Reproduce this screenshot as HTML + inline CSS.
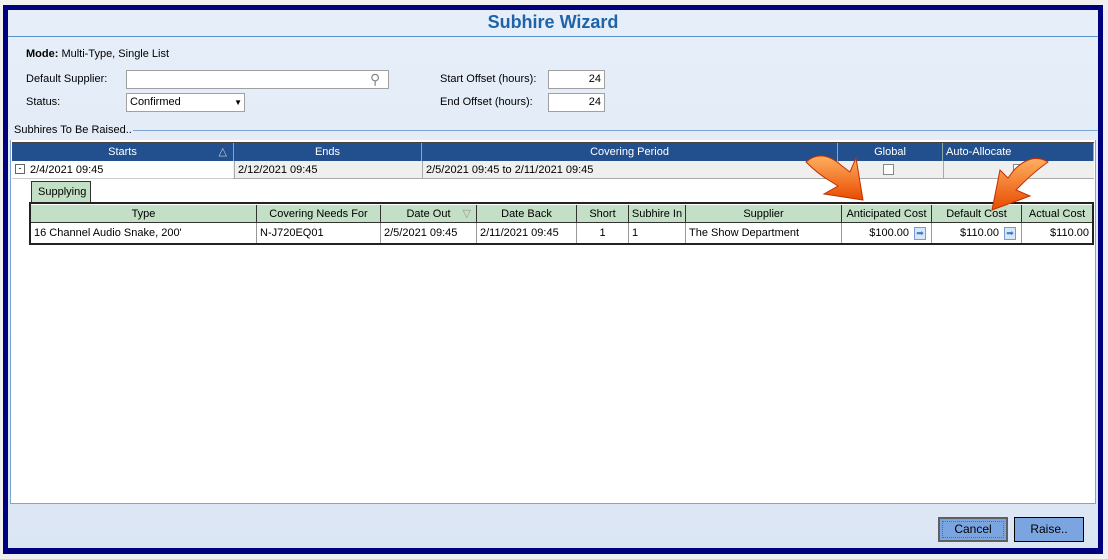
<!DOCTYPE html>
<html><head><style>
*{margin:0;padding:0;box-sizing:border-box}
body{width:1108px;height:559px;background:#f0f0f0;font-family:"Liberation Sans",sans-serif;font-size:11px;color:#000;position:relative;overflow:hidden}
.a{position:absolute}
.hd{position:absolute;background:#22508f;color:#fff;text-align:center;height:18px;line-height:18px;border-right:1px solid #8aa;}
.c{position:absolute;height:18px;line-height:18px;padding-left:3px;white-space:nowrap}
.gh{position:absolute;top:205px;height:18px;line-height:18px;background:#c3dfc5;text-align:center;border-right:1px solid #333;white-space:nowrap}
.gd{position:absolute;top:223px;height:20px;line-height:20px;border-right:1px solid #999;padding:0 3px;white-space:nowrap}
.inp{position:absolute;background:#fff;border:1px solid #a0a0a0;height:19px;line-height:17px;padding:0 3px}
.btn{position:absolute;display:inline-block;width:12px;height:13px;background:#d9e6f7;border:1px solid #7a9cd0;top:227px;color:#3a7bd5;font-size:9px;line-height:11px;text-align:center}
</style></head><body>
<div class="a" style="left:3px;top:5px;width:1100px;height:549px;background:#00007f"></div>
<div class="a" style="left:8px;top:10px;width:1090px;height:538px;background:linear-gradient(#e6eef9,#dbe6f4)"></div>
<div class="a" style="left:8px;top:36px;width:1090px;height:1px;background:#5a90c8"></div>
<div class="a" style="left:8px;top:12px;width:1090px;text-align:center;font-size:18px;font-weight:bold;color:#1f64a8">Subhire Wizard</div>
<div class="a" style="left:26px;top:48px"><b>Mode:</b> Multi-Type, Single List</div>
<div class="a" style="left:26px;top:73px">Default Supplier:</div>
<div class="inp" style="left:126px;top:70px;width:263px"></div>
<div class="a" style="left:370px;top:71px;color:#888;font-size:14px">&#9906;</div>
<div class="a" style="left:26px;top:96px">Status:</div>
<div class="inp" style="left:126px;top:93px;width:119px">Confirmed<span style="position:absolute;right:2px;top:0;font-size:8px">&#9660;</span></div>
<div class="a" style="left:440px;top:73px">Start Offset (hours):</div>
<div class="inp" style="left:548px;top:70px;width:57px;text-align:right">24</div>
<div class="a" style="left:440px;top:96px">End Offset (hours):</div>
<div class="inp" style="left:548px;top:93px;width:57px;text-align:right">24</div>
<div class="a" style="left:14px;top:124px">Subhires To Be Raised..</div>
<div class="a" style="left:133px;top:130px;width:965px;height:1px;background:#7aa6d6"></div>
<div class="a" style="left:10px;top:140px;width:1086px;height:364px;background:#fff;border:1px solid #7aa6d6;border-top:none"></div>
<div class="a" style="left:12px;top:142px;width:1082px;height:1px;background:#444"></div>
<div class="hd" style="left:12px;top:143px;width:222px">Starts<span style="position:absolute;right:6px;color:#ccc">&#9651;</span></div>
<div class="hd" style="left:234px;top:143px;width:188px">Ends</div>
<div class="hd" style="left:422px;top:143px;width:416px">Covering Period</div>
<div class="hd" style="left:838px;top:143px;width:105px">Global</div>
<div class="hd" style="left:943px;top:143px;width:151px;text-align:left;padding-left:3px">Auto-Allocate</div>
<div class="a" style="left:233px;top:161px;width:861px;height:18px;background:#efefef;border-bottom:1px solid #aaa"></div>
<div class="a" style="left:12px;top:178px;width:221px;height:1px;background:#ccc"></div>
<div class="a" style="left:15px;top:164px;width:10px;height:10px;border:1px solid #666;background:#fff;font-size:9px;line-height:7px;text-align:center">-</div>
<div class="c" style="left:27px;top:161px">2/4/2021 09:45</div>
<div class="c" style="left:234px;top:161px;border-left:1px solid #aaa">2/12/2021 09:45</div>
<div class="c" style="left:422px;top:161px;border-left:1px solid #aaa">2/5/2021 09:45 to 2/11/2021 09:45</div>
<div class="a" style="left:838px;top:161px;width:1px;height:18px;background:#aaa"></div>
<div class="a" style="left:943px;top:161px;width:1px;height:18px;background:#aaa"></div>
<div class="a" style="left:883px;top:164px;width:11px;height:11px;border:1px solid #888;background:#fff"></div>
<div class="a" style="left:1013px;top:164px;width:11px;height:11px;border:1px solid #888;background:#fff;font-size:10px;line-height:9px">&#10003;</div>
<div class="a" style="left:31px;top:181px;width:60px;height:22px;background:#c3dfc5;border:1px solid #333;border-bottom:none;padding:4px 0 0 6px">Supplying</div>
<div class="a" style="left:29px;top:202px;width:1065px;height:43px;border:2px solid #222;background:#fff"></div>
<div class="gh" style="left:31px;width:226px">Type</div>
<div class="gh" style="left:257px;width:124px">Covering Needs For</div>
<div class="gh" style="left:381px;width:96px">Date Out<span style="position:absolute;right:5px;color:#999">&#9661;</span></div>
<div class="gh" style="left:477px;width:100px">Date Back</div>
<div class="gh" style="left:577px;width:52px">Short</div>
<div class="gh" style="left:629px;width:57px">Subhire In</div>
<div class="gh" style="left:686px;width:156px">Supplier</div>
<div class="gh" style="left:842px;width:90px">Anticipated Cost</div>
<div class="gh" style="left:932px;width:90px">Default Cost</div>
<div class="gh" style="left:1022px;width:70px;border-right:none">Actual Cost</div>
<div class="a" style="left:31px;top:222px;width:1061px;height:1px;background:#333"></div>
<div class="gd" style="left:31px;width:226px">16 Channel Audio Snake, 200'</div>
<div class="gd" style="left:257px;width:124px">N-J720EQ01</div>
<div class="gd" style="left:381px;width:96px">2/5/2021 09:45</div>
<div class="gd" style="left:477px;width:100px">2/11/2021 09:45</div>
<div class="gd" style="left:577px;width:52px;text-align:center">1</div>
<div class="gd" style="left:629px;width:57px">1</div>
<div class="gd" style="left:686px;width:156px">The Show Department</div>
<div class="gd" style="left:842px;width:90px;text-align:right;padding-right:22px">$100.00</div>
<div class="gd" style="left:932px;width:90px;text-align:right;padding-right:22px">$110.00</div>
<div class="gd" style="left:1022px;width:70px;text-align:right;border-right:none">$110.00</div>
<div class="btn" style="left:914px">&#10145;</div>
<div class="btn" style="left:1004px">&#10145;</div>
<svg class="a" style="left:800px;top:150px" width="260" height="75">
<defs><linearGradient id="g" x1="0" y1="0" x2="0" y2="1"><stop offset="0" stop-color="#ffb060"/><stop offset="1" stop-color="#e84a00"/></linearGradient></defs>
<path d="M6,12 Q22,-2 42,16 L50,22 L56,8 L63,50 L24,44 L38,36 L30,31 Q18,24 6,12Z" fill="url(#g)" stroke="#c03000" stroke-width="1"/>
<path d="M248,12 Q232,2 214,20 L208,28 L200,20 L192,60 L230,46 L216,40 L222,34 Q234,22 248,12Z" fill="url(#g)" stroke="#c03000" stroke-width="1"/>
</svg>
<div class="a" style="left:938px;top:517px;width:70px;height:25px;background:#7ba5e0;border:2px solid #606060;text-align:center;line-height:21px;font-size:12px"><div style="position:absolute;left:2px;top:2px;right:2px;bottom:2px;border:1px dotted #a06000"></div>Cancel</div>
<div class="a" style="left:1014px;top:517px;width:70px;height:25px;background:#7ba5e0;border:1px solid #000;text-align:center;line-height:23px;font-size:12px">Raise..</div>
</body></html>
